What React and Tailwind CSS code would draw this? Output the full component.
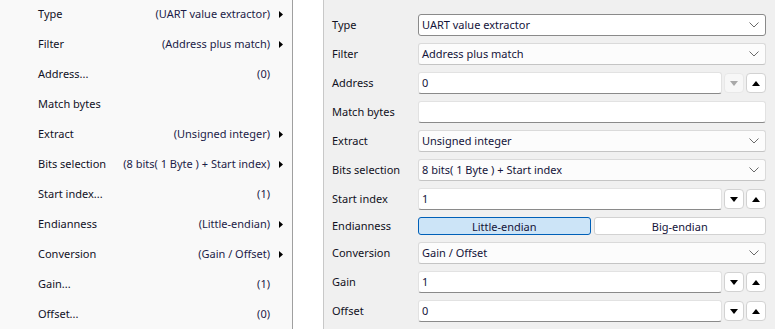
import React from "react";

const leftRows = [
  { label: "Type", value: "(UART value extractor)", arrow: true },
  { label: "Filter", value: "(Address plus match)", arrow: true },
  { label: "Address...", value: "(0)" },
  { label: "Match bytes", value: "" },
  { label: "Extract", value: "(Unsigned integer)", arrow: true },
  { label: "Bits selection", value: "(8 bits( 1 Byte ) + Start index)", arrow: true },
  { label: "Start index...", value: "(1)" },
  { label: "Endianness", value: "(Little-endian)", arrow: true },
  { label: "Conversion", value: "(Gain / Offset)", arrow: true },
  { label: "Gain...", value: "(1)" },
  { label: "Offset...", value: "(0)" },
];

function RightArrow() {
  return (
    <svg width="4" height="7" viewBox="0 0 4 7" className="block">
      <path d="M0 0 L4 3.5 L0 7 Z" fill="#000" />
    </svg>
  );
}

function Chevron() {
  return (
    <svg width="10" height="6" viewBox="0 0 10 6" className="block">
      <path d="M0.5 0.5 L5 5 L9.5 0.5" fill="none" stroke="#6a6a6a" strokeWidth="1" />
    </svg>
  );
}

function Combo({ text, focused }) {
  return (
    <div
      className={
        "flex h-[22px] w-full items-center rounded-[3px] border pl-[3px] pr-[6px] " +
        (focused
          ? "border-[#8a8a8a] bg-white"
          : "border-[#dadada] border-b-[#c4c4c4] bg-[#fcfcfc]")
      }
    >
      <span className="flex-1 whitespace-nowrap leading-[16px] text-[#14143a]">{text}</span>
      <Chevron />
    </div>
  );
}

function Tri({ up, color }) {
  return (
    <svg width="8" height="5" viewBox="0 0 8 5" className="block">
      {up ? (
        <path d="M0 5 L4 0 L8 5 Z" fill={color} />
      ) : (
        <path d="M0 0 L4 5 L8 0 Z" fill={color} />
      )}
    </svg>
  );
}

function SpinButton({ up, disabled }) {
  return (
    <div
      className={
        "ml-[2px] flex h-[20px] w-[20px] shrink-0 items-center justify-center rounded-[4px] border " +
        (disabled ? "border-[#e8e8e8] bg-[#f7f7f7]" : "border-[#d2d2d2] bg-white")
      }
    >
      <Tri up={up} color={disabled ? "#a8a8a8" : "#000"} />
    </div>
  );
}

function TextBox({ text }) {
  return (
    <div className="flex h-[22px] min-w-0 flex-1 items-center rounded-[3px] border border-[#e2e2e2] border-b-[#8a8a8a] bg-white pl-[3px]">
      <span className="whitespace-nowrap leading-[16px] text-[#14143a]">{text}</span>
    </div>
  );
}

function Spin({ text, downDisabled }) {
  return (
    <div className="flex w-full items-center">
      <TextBox text={text} />
      <SpinButton disabled={downDisabled} />
      <SpinButton up />
    </div>
  );
}

function Row({ label, children, h = "h-[22px]" }) {
  return (
    <div className={"flex items-center " + h}>
      <div className="w-[86px] shrink-0 whitespace-nowrap leading-[16px] text-[#111122]">{label}</div>
      <div className="flex w-[348px] items-center">{children}</div>
    </div>
  );
}

export default function App() {
  return (
    <div
      className="flex h-[329px] w-[775px] overflow-hidden text-[11px] leading-none"
      style={{ fontFamily: "'Segoe UI', 'Noto Sans', sans-serif" }}
    >
      <div className="w-[292px] shrink-0 bg-[#f9f9f9]">
        <div className="mt-[-1px] flex flex-col">
          {leftRows.map((r) => (
            <div key={r.label} className="flex h-[30px] items-center whitespace-nowrap pl-[38px] leading-[16px]">
              <span className="text-[#111126]">{r.label}</span>
              <span className="flex-1" />
              <span className="text-[#1c1c48]">{r.value}</span>
              <span className="ml-[9px] mr-[9px] w-[4px]">{r.arrow ? <RightArrow /> : null}</span>
            </div>
          ))}
        </div>
      </div>
      <div className="w-px shrink-0 bg-[#a0a0a0]" />
      <div className="w-[30px] shrink-0 bg-white" />
      <div className="w-px shrink-0 bg-[#c8c8c8]" />
      <div className="flex flex-1 flex-col gap-[7px] bg-[#f0f0f0] pl-[8px] pt-[14px]">
        <Row label="Type">
          <Combo text="UART value extractor" focused />
        </Row>
        <Row label="Filter">
          <Combo text="Address plus match" />
        </Row>
        <Row label="Address">
          <Spin text="0" downDisabled />
        </Row>
        <Row label="Match bytes">
          <TextBox text="" />
        </Row>
        <Row label="Extract">
          <Combo text="Unsigned integer" />
        </Row>
        <Row label="Bits selection">
          <Combo text="8 bits( 1 Byte ) + Start index" />
        </Row>
        <Row label="Start index">
          <Spin text="1" />
        </Row>
        <Row label="Endianness" h="h-[18px]">
          <div className="flex w-full gap-[3px]">
            <div className="flex h-[18px] flex-1 items-center justify-center rounded-[3px] border border-[#0060b8] bg-[#cce4f7] text-[#14143a]">
              Little-endian
            </div>
            <div className="flex h-[18px] flex-1 items-center justify-center rounded-[3px] border border-[#d2d2d2] bg-white text-[#14143a]">
              Big-endian
            </div>
          </div>
        </Row>
        <Row label="Conversion">
          <Combo text="Gain / Offset" />
        </Row>
        <Row label="Gain">
          <Spin text="1" />
        </Row>
        <Row label="Offset">
          <Spin text="0" />
        </Row>
      </div>
    </div>
  );
}
